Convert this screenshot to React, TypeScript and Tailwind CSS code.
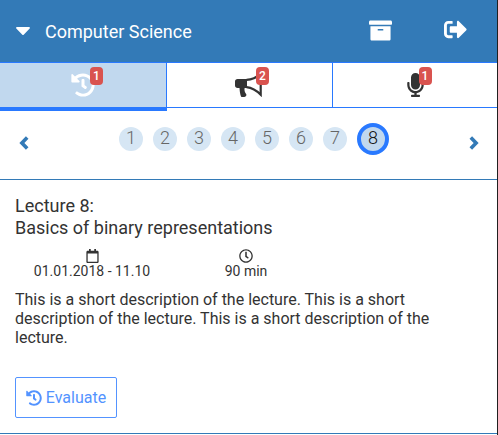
import type { ReactNode } from "react";
import {
  FaArchive,
  FaCaretDown,
  FaHistory,
  FaMicrophone,
  FaRegCalendar,
  FaRegClock,
  FaSignOutAlt,
} from "react-icons/fa";

function Bullhorn() {
  return (
    <svg viewBox="0 0 28 24" fill="currentColor" className="-mr-[2px] h-6 w-7">
      <path d="M2.6 6H12v9H9.6c-.4 2.3.1 4.2 1.7 6.2.5 1.4-.5 2.5-2.3 2.8H6.5c-1-.5-1.8-5.6-2-9H2.6C1 15 0 14 0 12.5v-4C0 7 1 6 2.6 6Z" />
      <path d="M11.5 6.9C17 6.7 21.2 4.9 25.7 .6v21c-4-4-8.7-6.8-14.2-7.5" fill="none" stroke="currentColor" strokeWidth="2.2" />
    </svg>
  );
}

function Tab({ icon, count, className }: { icon: ReactNode; count: number; className: string }) {
  return (
    <button className={`flex justify-center pt-[10px] ${className}`}>
      <span className="relative block h-6">
        {icon}
        <span className="absolute -top-[6px] right-[-8px] flex h-[18px] w-[13px] items-center justify-center rounded-[4px] bg-[#d9534f] text-[12px] font-medium leading-none text-white">
          {count}
        </span>
      </span>
    </button>
  );
}

function Header() {
  return (
    <header className="flex h-[62px] items-center bg-[#337ab7] text-white">
      <FaCaretDown className="-mt-[2px] ml-[15px] h-[24px] w-[16px]" />
      <h1 className="ml-[14px] mt-px text-[18px] leading-6">Computer Science</h1>
      <FaArchive className="-mt-[2px] ml-auto h-[23px] w-[23px]" />
      <FaSignOutAlt className="-mt-[3px] ml-[52px] mr-[30px] h-[23px] w-[23px]" />
    </header>
  );
}

function Chevron({ className }: { className: string }) {
  return (
    <svg viewBox="0 0 10 14" fill="none" stroke="currentColor" strokeWidth="3.6" className={`h-[14px] w-[10px] ${className}`}>
      <path d="M8.2 1.6 2.9 7 8.2 12.4" />
    </svg>
  );
}

function Pager() {
  return (
    <nav className="flex h-[69px] items-center justify-between border-b border-[#337ab7] pl-[19px] pr-[18px] text-[#337ab7]">
      <Chevron className="-mt-[5px]" />
      <ol className="-mt-[12px] ml-[10px] flex items-center gap-[10px] text-[18px] font-light leading-none">
        {[1, 2, 3, 4, 5, 6, 7].map((n) => (
          <li key={n} className="flex h-6 w-6 items-center justify-center rounded-full bg-[#d6e6f4] pb-[2px] text-[#666]">
            {n}
          </li>
        ))}
        <li className="flex h-8 w-8 items-center justify-center rounded-full border-4 border-[#2979ff] bg-[#c1d8ee] pb-[2px] text-[#111]">
          8
        </li>
      </ol>
      <Chevron className="-mt-[5px] rotate-180" />
    </nav>
  );
}

export default function App() {
  return (
    <div className="h-[435px] w-[498px] overflow-hidden border-r border-[#202020] bg-white font-['Roboto',sans-serif] text-[#333]">
      <Header />
      <div className="flex h-[49px] items-start border-t border-[#2979ff]">
        <Tab
          className="h-12 w-[167px] border-b-4 border-r border-[#2979ff] bg-[#c1d8ee]"
          count={1}
          icon={<FaHistory className="h-6 w-6 text-white" />}
        />
        <Tab className="h-[45px] w-[166px] border-b border-r border-[#2979ff] pr-[3px]" count={2} icon={<Bullhorn />} />
        <Tab className="h-[45px] w-[164px] border-b border-[#2979ff]" count={1} icon={<FaMicrophone className="h-6 w-[17px]" />} />
      </div>
      <Pager />
      <main className="h-[254px] border-b border-[#337ab7] px-[15px] pt-[15px]">
        <h2 className="text-[18px] leading-[22px]">
          Lecture 8:
          <br />
          Basics of binary representations
        </h2>
        <div className="mt-[10px] flex text-[14px] leading-[16px]">
          <div className="flex w-[154px] flex-col items-center">
            <FaRegCalendar className="h-[14px] w-[13px]" />
            <span>01.01.2018 - 11.10</span>
          </div>
          <div className="flex w-[154px] flex-col items-center">
            <FaRegClock className="h-[14px] w-[14px]" />
            <span>90 min</span>
          </div>
        </div>
        <p className="mt-[11px] w-[440px] text-[16px] leading-[19px]">
          This is a short description of the lecture. This is a short description of the lecture. This is a short
          description of the lecture.
        </p>
        <button className="mt-[30px] flex h-[41px] w-[102px] items-center justify-center gap-1 rounded-[2px] border border-[#5393ff] text-[16px] text-[#5393ff]">
          <FaHistory className="h-4 w-4" />
          <span>Evaluate</span>
        </button>
      </main>
    </div>
  );
}
